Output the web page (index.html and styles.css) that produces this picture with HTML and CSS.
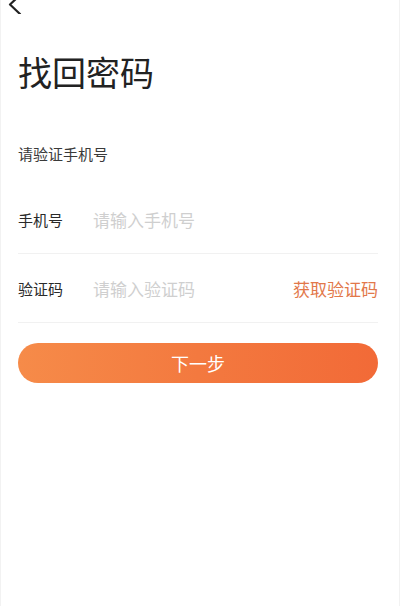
FILE: index.html
```html
<!DOCTYPE html>
<html lang="zh-CN">
<head>
<meta charset="utf-8">
<title>找回密码</title>
<link rel="stylesheet" href="styles.css">
</head>
<body>
<div class="page">
  <div class="topbar">
    <svg class="back" width="24" height="14" viewBox="0 0 24 14">
      <path d="M15 -4 L6 4.5 L16 14" fill="none" stroke="#222" stroke-width="2.2" stroke-linecap="round" stroke-linejoin="round"/>
    </svg>
  </div>
  <h1 class="title">找回密码</h1>
  <p class="subtitle">请验证手机号</p>
  <div class="form">
    <div class="row">
      <span class="label">手机号</span>
      <input class="field" type="text" placeholder="请输入手机号">
    </div>
    <div class="row">
      <span class="label">验证码</span>
      <input class="field" type="text" placeholder="请输入验证码">
      <span class="getcode">获取验证码</span>
    </div>
  </div>
  <button class="next" type="button">下一步</button>
</div>
</body>
</html>
```
FILE: styles.css
```css
html, body {
  margin: 0;
  padding: 0;
  background: #fff;
}
body {
  font-family: "Noto Sans CJK SC", "Noto Sans", sans-serif;
  color: #333;
}
.page {
  min-height: 606px;
  box-sizing: border-box;
  padding: 0 21px 0 17px;
  border-left: 1px solid #f2f2f2;
  border-right: 1px solid #f2f2f2;
  margin: 0;
}
.topbar {
  height: 14px;
  margin-left: -14px;
}
.back {
  display: block;
}
.title {
  margin: 41px 0 0;
  font-size: 34px;
  line-height: 34px;
  font-weight: 400;
  color: #222;
}
.subtitle {
  margin: 57px 0 0;
  font-size: 15px;
  line-height: 15px;
  color: #3a3a3a;
}
.form {
  margin-top: 24px;
}
.row {
  display: flex;
  align-items: center;
  height: 68px;
  border-bottom: 1px solid #f1f1f1;
}
.label {
  width: 75px;
  flex: none;
  font-size: 15px;
  color: #2a2a2a;
}
.field {
  flex: 1;
  min-width: 0;
  border: none;
  outline: none;
  padding: 0;
  margin: 0;
  background: transparent;
  font-family: inherit;
  font-size: 17px;
  color: #333;
}
.field::placeholder {
  color: #cfcfcf;
}
.getcode {
  flex: none;
  font-size: 17px;
  color: #e2784a;
}
.next {
  display: block;
  width: 100%;
  height: 40px;
  margin-top: 20px;
  border: none;
  border-radius: 20px;
  background: linear-gradient(90deg, #f68b49 0%, #f3793f 50%, #f26a37 100%);
  color: #fff;
  font-family: inherit;
  font-size: 18px;
  padding: 0;
}
```
